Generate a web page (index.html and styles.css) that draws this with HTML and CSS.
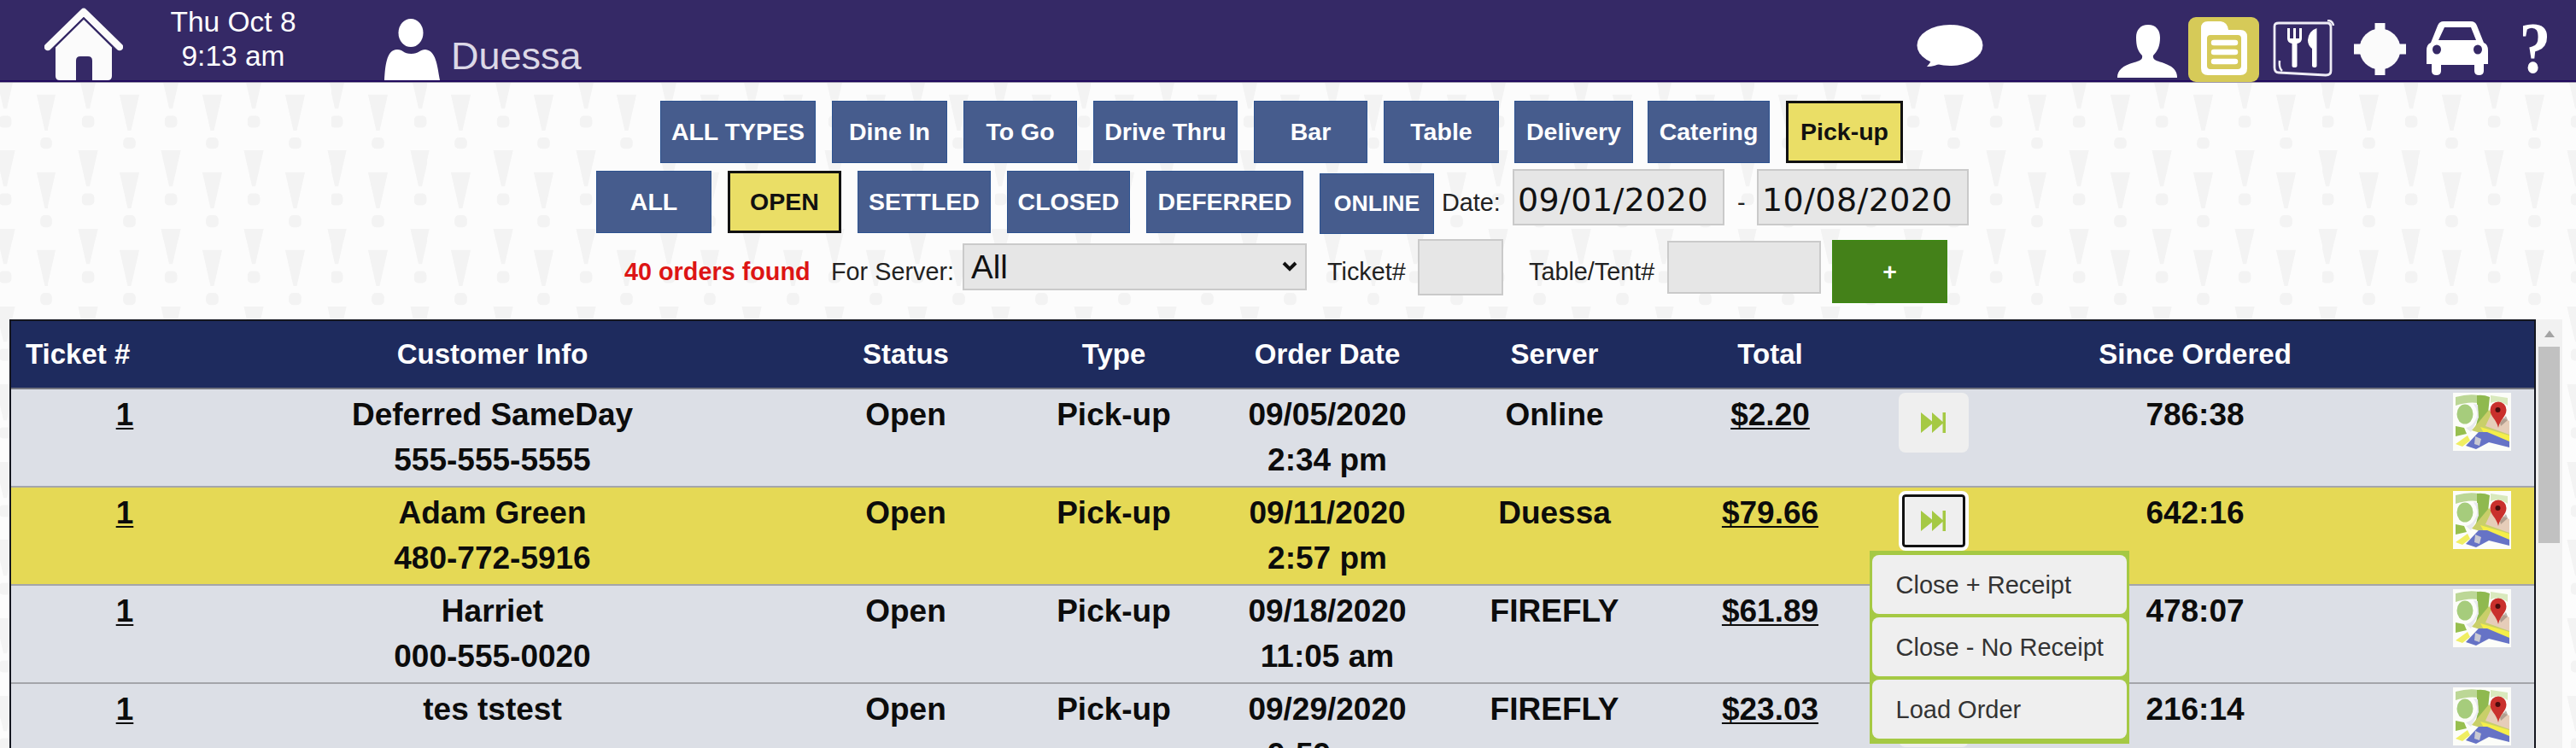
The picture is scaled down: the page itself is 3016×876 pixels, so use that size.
FILE: index.html
```html
<!DOCTYPE html>
<html lang="en">
<head>
  <meta charset="UTF-8" />
  <title>Orders</title>
  <link rel="stylesheet" href="styles.css">
</head>
<body>

<svg class="defs" width="0" height="0">
  <symbol id="skip" viewBox="0 0 30 24">
    <path d="M0 0 L13 10.5 V0 L25.500 11 V0 H29 V24 H25.500 V13 L13 24 V13.500 L0 24Z" fill="#a5c944"/>
  </symbol>
  <symbol id="map" viewBox="0 0 68 68">
    <rect width="68" height="68" fill="#fcfdf9"/>
    <path d="M3 5 Q18 1 30 3 V12 Q17 10 3 15Z" fill="#bcd796"/>
    <path d="M28 3 Q36 2 43 5 L41 24 L24 45 Q32 30 28 14Z" fill="#8fb94f"/>
    <path d="M44 3 L64 6 V15 Q54 8 44 12Z" fill="#d9e9bd"/>
    <ellipse cx="14" cy="25" rx="9.500" ry="11.500" fill="#a6cc7c"/>
    <path d="M24 13 Q32 24 25 34 Q21 40 15 41 L21 46 L30 29 L29 14Z" fill="#e8e9ee"/>
    <path d="M3 39 L13 41 L16 48 L3 51Z" fill="#97bf4f"/>
    <path d="M42 20 L66 48 V58 L22 44Z" fill="#c9cf69"/>
    <path d="M45 24 L66 33 V49 L38 39Z" fill="#e6cdb9"/>
    <path d="M32 40 L66 50 V57 L36 47Z" fill="#f5ee49"/>
    <path d="M30 46 L40 46 L66 57 V64 L42 58 L27 66 L15 62Z" fill="#6673c6"/>
    <path d="M3 60 L17 50 L20 56 L11 63Z" fill="#f0ee62"/>
    <path d="M26 51 L33 54 L31 62 L25 60Z" fill="#c9c9d2"/>
    <path d="M55 35 L62 27 L64 32 L56 39Z" fill="#7d6f66" opacity=".5"/>
    <path d="M53 41 C51 31 43.500 28 43.500 20 A9.500 9.500 0 0 1 62.500 20 C62.500 28 55 31 53 41Z" fill="#c9302c"/>
    <circle cx="52.500" cy="20" r="3" fill="#4a0d0d"/>
  </symbol>
</svg>

<header class="topbar">
  <svg class="home" viewBox="0 0 92 86">
    <path d="M4 46 L46 5 L88 46" fill="none" stroke="#fbfbfb" stroke-width="8.500" stroke-linecap="round" stroke-linejoin="round"/>
    <path d="M46 13 L79 45 V80 Q79 85 74 85 H56 V62 Q56 57 51 57 H42 Q37 57 37 62 V85 H18 Q13 85 13 80 V45Z" fill="#fbfbfb"/>
    <path d="M8 50 L46 12.500 L84 50" fill="none" stroke="#352966" stroke-width="2"/>
  </svg>
  <div class="clock">Thu Oct 8<br>9:13 am</div>
  <svg class="user" viewBox="0 0 65 72">
    <ellipse cx="31" cy="16.500" rx="14.500" ry="16.500" fill="#fff"/>
    <path d="M0 72 C1 57 2 36 15 36 C22 36 22 41 31.500 41 C40 41 42 36 48 36 C61 37 62 57 65 72Z" fill="#fff"/>
  </svg>
  <div class="user-name">Duessa</div>

  <svg class="chat" viewBox="0 0 78 50">
    <ellipse cx="39" cy="24" rx="38.500" ry="24" fill="#fff"/>
    <path d="M18 38 Q17 44 12 49 Q22 49 30 44Z" fill="#fff"/>
  </svg>

  <nav class="modes">
    <svg class="mode-person" viewBox="0 0 70 62">
      <path d="M36 0 C45 0 50 6 50 15 C50 25 47 31 42 36 C41 41 46 42 52 44 C64 48 70 53 70 62 H0 C0 53 6 48 20 44 C26 42 30 41 29 36 C24 31 22 25 22 15 C22 6 27 0 36 0Z" fill="#fff"/>
    </svg>
    <span class="mode-orders">
      <svg viewBox="0 0 54 64">
        <path fill-rule="evenodd" d="M8 0 H23 Q31 1 32 10 H46 Q54 10 54 18 V55 Q54 63 46 63 H8 Q0 63 0 55 V8 Q0 0 8 0Z M11 16 Q7 16 7 20 V52 Q7 56 11 56 H43 Q47 56 47 52 V20 Q47 16 43 16Z" fill="#fff"/>
        <path d="M15 25 H40 M15 36 H40 M15 47 H40" stroke="#fff" stroke-width="6.500" stroke-linecap="round"/>
      </svg>
    </span>
    <svg class="mode-dine" viewBox="0 0 73 68">
      <path d="M7 4 H64 Q68 4 68 9 V60 Q68 65 62 65 L7 62 Q2 62 2 56 V8 Q2 4 7 4Z" fill="none" stroke="#eeecf5" stroke-width="2.800"/>
      <path d="M64 1 Q70 1 71 7 M8 48 Q7 57 11 60" fill="none" stroke="#eeecf5" stroke-width="2.500"/>
      <path d="M17 10 H20 V22 H24 V10 H27 V22 H31 V10 H34 V22 Q34 27 28.500 28 V54 Q28.500 56 25.500 56 Q22.500 56 22.500 54 V28 Q17 27 17 22Z M51.500 10 V54 Q51.500 56 48.500 56 Q46 56 46 54 V34 Q41 30 41 24 Q42 13 51.500 10Z" fill="#fff"/>
    </svg>
    <svg class="mode-target" viewBox="0 0 61 61">
      <circle cx="30.500" cy="30.500" r="24" fill="#fbfbfb"/>
      <path d="M24.500 0 H36.500 V61 H24.500Z M0 24.500 H61 V36.500 H0Z" fill="#fbfbfb"/>
    </svg>
    <svg class="mode-car" viewBox="0 0 72 63">
      <path fill-rule="evenodd" d="M20 0 H52 Q57 0 59 5 L67 25 Q72 27 72 34 V50 H67 V58 Q67 63 61.500 63 Q56 63 56 58 V51 H17 V58 Q17 63 11.500 63 Q6 63 6 58 V50 H0 V34 Q0 27 5 25 L13 5 Q15 0 20 0Z M21 7 L14 22 H58 L52 7Z M12 27.500 A5 5.500 0 1 0 12 38.500 A5 5.500 0 1 0 12 27.500Z M60 27.500 A5 5.500 0 1 0 60 38.500 A5 5.500 0 1 0 60 27.500Z" fill="#fff"/>
    </svg>
    <span class="mode-help">?</span>
  </nav>
</header>

<div class="filters">
  <div class="types">
    <button class="btn w182">ALL TYPES</button>
    <button class="btn w135">Dine In</button>
    <button class="btn w133">To Go</button>
    <button class="btn w169">Drive Thru</button>
    <button class="btn w133">Bar</button>
    <button class="btn w135">Table</button>
    <button class="btn w139">Delivery</button>
    <button class="btn w143">Catering</button>
    <button class="btn w137 active">Pick-up</button>
  </div>

  <div class="states">
    <button class="btn w135">ALL</button>
    <button class="btn w133 active">OPEN</button>
    <button class="btn w156">SETTLED</button>
    <button class="btn w144">CLOSED</button>
    <button class="btn w184">DEFERRED</button>
    <button class="btn online">ONLINE</button>
    <label class="date-label">Date:</label>
    <input class="date" type="text" value="09/01/2020">
    <span class="dash">-</span>
    <input class="date" type="text" value="10/08/2020">
  </div>

  <div class="search">
    <span class="found">40 orders found</span>
    <label class="server-label">For Server:</label>
    <select class="server"><option>All</option></select>
    <label class="ticket-label">Ticket#</label>
    <input class="ticket" type="text">
    <label class="tent-label">Table/Tent#</label>
    <input class="tent" type="text">
    <button class="btn add">+</button>
  </div>
</div>

<div class="orders">
  <div class="table-wrap">
    <table>
      <colgroup>
        <col class="c-ticket"><col class="c-customer"><col class="c-status"><col class="c-type"><col class="c-date">
        <col class="c-server"><col class="c-total"><col class="c-action"><col class="c-since"><col class="c-map">
      </colgroup>
      <tr>
        <th class="first">Ticket #</th>
        <th>Customer Info</th>
        <th>Status</th>
        <th>Type</th>
        <th>Order Date</th>
        <th>Server</th>
        <th>Total</th>
        <th></th>
        <th>Since Ordered</th>
        <th></th>
      </tr>
      <tr>
        <td class="num"><u>1</u></td>
        <td>Deferred SameDay<br>555-555-5555</td>
        <td>Open</td>
        <td>Pick-up</td>
        <td>09/05/2020<br>2:34 pm</td>
        <td>Online</td>
        <td><u>$2.20</u></td>
        <td class="action"><div class="next"><svg><use href="#skip"/></svg></div></td>
        <td>786:38</td>
        <td class="map"><svg><use href="#map"/></svg></td>
      </tr>
      <tr class="selected">
        <td class="num"><u>1</u></td>
        <td>Adam Green<br>480-772-5916</td>
        <td>Open</td>
        <td>Pick-up</td>
        <td>09/11/2020<br>2:57 pm</td>
        <td>Duessa</td>
        <td><u>$79.66</u></td>
        <td class="action">
          <div class="next focus"><svg><use href="#skip"/></svg>
            <div class="menu">
              <div class="item">Close + Receipt</div>
              <div class="item">Close - No Receipt</div>
              <div class="item">Load Order</div>
            </div>
          </div>
        </td>
        <td>642:16</td>
        <td class="map"><svg><use href="#map"/></svg></td>
      </tr>
      <tr>
        <td class="num"><u>1</u></td>
        <td>Harriet<br>000-555-0020</td>
        <td>Open</td>
        <td>Pick-up</td>
        <td>09/18/2020<br>11:05 am</td>
        <td>FIREFLY</td>
        <td><u>$61.89</u></td>
        <td class="action"><div class="next"><svg><use href="#skip"/></svg></div></td>
        <td>478:07</td>
        <td class="map"><svg><use href="#map"/></svg></td>
      </tr>
      <tr>
        <td class="num"><u>1</u></td>
        <td>tes tstest</td>
        <td>Open</td>
        <td>Pick-up</td>
        <td>09/29/2020<br>9:59 pm</td>
        <td>FIREFLY</td>
        <td><u>$23.03</u></td>
        <td class="action"><div class="next"><svg><use href="#skip"/></svg></div></td>
        <td>216:14</td>
        <td class="map"><svg><use href="#map"/></svg></td>
      </tr>
    </table>
  </div>
  <div class="scrollbar">
    <div class="arrow"></div>
    <div class="thumb"></div>
  </div>
</div>

</body>
</html>
```
FILE: styles.css
```css
* {
  box-sizing: border-box;
}
html, body {
  height: 876px;
  overflow: hidden;
}
body {
  margin: 0;
  font-family: "Liberation Sans", Arial, sans-serif;
  background-color: #fcfcfc;
  background-image: url("data:image/svg+xml,%3Csvg xmlns='http://www.w3.org/2000/svg' width='97.13' height='91.2' viewBox='0 0 97.13 91.2'%3E%3Cg fill='%23f3f3f3'%3E%3Cpath d='M42.500 19.500h23l-9.500 42h-4zM-5.500-6h23l-9.500 42h-4zM-5.500 85.200h23l-9.500 42h-4zM91.630-6h23l-9.500 42h-4zM91.630 85.200h23l-9.500 42h-4z'/%3E%3Crect x='46.800' y='69.500' width='14.500' height='14' rx='5'/%3E%3Crect x='-1.200' y='44' width='14.500' height='14' rx='5'/%3E%3Crect x='95.930' y='44' width='14.500' height='14' rx='5'/%3E%3C/g%3E%3C/svg%3E");
  background-size: 97.13px 91.2px;
}
.defs {
  display: block;
}

/* top bar */
.topbar {
  display: flex;
  align-items: flex-start;
  height: 97px;
  background: #352966;
  border-bottom: 1px solid #9d98ad;
  box-shadow: inset 0 -2px 0 #210a5e;
  color: #fff;
}
.home {
  width: 92px;
  height: 86px;
  margin: 9px 0 0 52px;
}
.clock {
  width: 200px;
  margin: 6px 0 0 29px;
  font-size: 33.5px;
  line-height: 39.5px;
  text-align: center;
}
.user {
  width: 65px;
  height: 72px;
  margin: 22px 0 0 77px;
}
.user-name {
  width: 200px;
  margin: 41px 0 0 13px;
  font-size: 45px;
  line-height: 50px;
  color: #dcd8e6;
}
.chat {
  width: 78px;
  height: 50px;
  margin: 29px 0 0 1516px;
}
.modes {
  display: flex;
  align-items: flex-start;
  margin-left: 157px;
}
.mode-person {
  width: 70px;
  height: 62px;
  margin-top: 29px;
}
.mode-orders {
  display: flex;
  width: 83px;
  height: 76px;
  margin: 20px 0 0 13px;
  padding: 5px 0 0 15px;
  background: #d6ca58;
  border-radius: 9px;
}
.mode-orders svg {
  width: 54px;
  height: 64px;
}
.mode-dine {
  width: 73px;
  height: 68px;
  margin: 23px 0 0 16px;
}
.mode-target {
  width: 61px;
  height: 61px;
  margin: 27px 0 0 22px;
}
.mode-car {
  width: 72px;
  height: 63px;
  margin: 25px 0 0 24px;
}
.mode-help {
  margin: 18px 0 0 34px;
  font-family: "Liberation Serif", serif;
  font-weight: bold;
  font-size: 84px;
  line-height: 78px;
  transform: scaleX(.88);
}

/* filters */
.filters {
  height: 277px;
  padding-top: 21px;
  color: #222;
  font-size: 28.8px;
}
.types, .states, .search {
  display: flex;
  align-items: flex-start;
}
.types {
  height: 80px;
  padding-left: 773px;
}
.states {
  height: 82px;
  padding-left: 698px;
}
.search {
  padding-left: 731px;
}
.btn {
  height: 73px;
  margin: 0 19px 0 0;
  padding: 0;
  border: 1px solid #2c5290;
  background: #465c8d;
  color: #fff;
  font-family: inherit;
  font-weight: bold;
  font-size: 28.5px;
}
.btn.active {
  border: 3px solid #111;
  background: #eade66;
  color: #111;
}
.states .btn {
  margin-top: 2px;
  margin-right: 19px;
}
.w133 { width: 133px; }
.w135 { width: 135px; }
.w137 { width: 137px; }
.w139 { width: 139px; }
.w143 { width: 143px; }
.w144 { width: 144px; }
.w156 { width: 156px; }
.w169 { width: 169px; }
.w182 { width: 182px; }
.w184 { width: 184px; }
.types .w139 {
  margin-left: -1px;
  margin-right: 17px;
}
.states .online {
  width: 134px;
  height: 71px;
  margin: 5px 9px 0 0;
  font-size: 26.6px;
}
input, select {
  border: 2px solid #cacaca;
  border-radius: 0;
  background: #e6e6e6;
  color: #111;
}
.date {
  width: 248px;
  height: 66px;
  padding: 5px 0 0 4px;
  font-family: "DejaVu Sans", Verdana, sans-serif;
  font-size: 38px;
  letter-spacing: .4px;
}
label, .found, .dash {
  line-height: 78px;
  white-space: nowrap;
}
.date-label {
  width: 83px;
}
.dash {
  width: 23px;
  margin-left: 15px;
}
.search label, .found {
  line-height: 76px;
}
.found {
  width: 242px;
  font-weight: bold;
  color: #dd1515;
}
.server-label {
  width: 154px;
}
.server {
  width: 403px;
  height: 55px;
  margin: 5px 0 0;
  padding: 0 0 1px 8px;
  appearance: none;
  font-family: inherit;
  font-size: 38.5px;
  background: #e6e6e6 url("data:image/svg+xml,%3Csvg xmlns='http://www.w3.org/2000/svg' width='18' height='12'%3E%3Cpath d='M2 2l7 7 7-7' fill='none' stroke='%23111' stroke-width='4'/%3E%3C/svg%3E") no-repeat right 9px top 19px;
}
.ticket-label {
  width: 106px;
  margin-left: 24px;
}
.ticket {
  width: 100px;
  height: 66px;
}
.tent-label {
  width: 162px;
  margin-left: 30px;
}
.tent {
  width: 180px;
  height: 62px;
  margin-top: 2px;
}
.btn.add {
  width: 135px;
  height: 74px;
  margin: 1px 0 0 13px;
  background: #448119;
  border-color: #3b8a10;
}

/* order list */
.orders {
  display: flex;
  height: 502px;
  padding-left: 11px;
}
.table-wrap {
  width: 2958px;
  border: 2px solid #14161f;
  border-bottom: 0;
}
table {
  width: 2954px;
  table-layout: fixed;
  border-spacing: 0;
}
.c-ticket { width: 187px; }
.c-customer { width: 753px; }
.c-status { width: 215px; }
.c-type { width: 272px; }
.c-date { width: 228px; }
.c-server { width: 304px; }
.c-total { width: 201px; }
.c-action { width: 181px; }
.c-since { width: 432px; }
.c-map { width: 181px; }
th {
  height: 80px;
  padding: 0 0 1px;
  background: #1e2b5e;
  border-bottom: 2px solid #73757f;
  color: #fff;
  font-size: 33px;
}
th.first {
  padding-left: 17px;
  text-align: left;
}
td {
  height: 115px;
  padding: 4px 0 0;
  background: #dcdfe6;
  border-bottom: 2px solid #a4a5aa;
  color: #0c0c0c;
  font-weight: bold;
  font-size: 37px;
  line-height: 52.5px;
  text-align: center;
  vertical-align: top;
  white-space: nowrap;
}
.selected td {
  background: #e5d955;
}
td u {
  text-decoration-thickness: 2px;
  text-underline-offset: 3px;
}
td.num {
  padding-left: 79px;
}
.next {
  position: relative;
  display: flex;
  align-items: center;
  justify-content: center;
  width: 82px;
  height: 70px;
  margin: 0 auto;
  border-radius: 8px;
  background: #efefef;
}
.next > svg {
  width: 30px;
  height: 24px;
}
.next.focus {
  border: 4px solid #fff;
  box-shadow: inset 0 0 0 3px #111;
}
.menu {
  position: absolute;
  z-index: 2;
  top: 66px;
  left: -38px;
  display: flex;
  flex-direction: column;
  gap: 4px;
  width: 304px;
  padding: 5px 3px 6px;
  background: #a5c944;
}
.item {
  height: 69px;
  padding-left: 28px;
  border-radius: 8px;
  background: #efefef;
  color: #333;
  font-weight: normal;
  font-size: 29px;
  line-height: 70px;
  text-align: left;
}
td.map {
  padding: 4px 0 0 86px;
  text-align: left;
}
.map svg {
  display: block;
  width: 68px;
  height: 68px;
}
.scrollbar {
  width: 31px;
  padding: 13px 3px 0;
  background: #f1f1f1;
}
.arrow {
  width: 0;
  height: 8px;
  margin: 0 auto 11px;
  border: 6px solid transparent;
  border-top: 0;
  border-bottom: 8px solid #a3a3a3;
}
.thumb {
  height: 230px;
  background: #c1c1c1;
}
```
